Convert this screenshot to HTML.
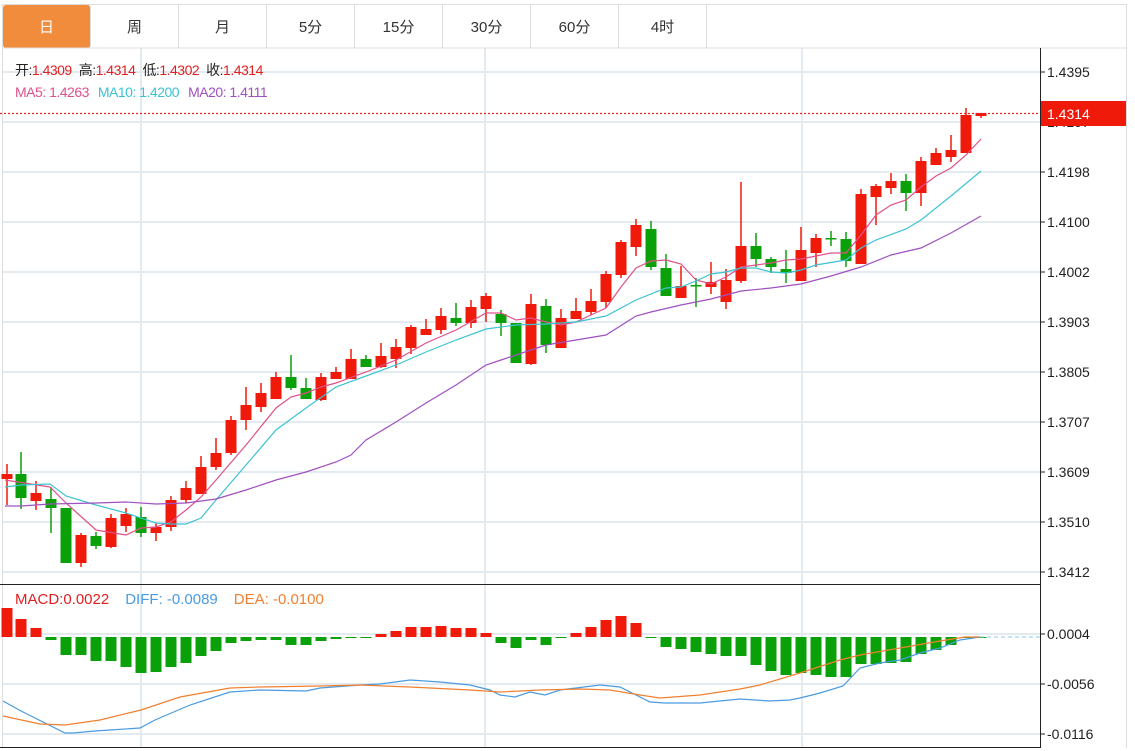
<!DOCTYPE html>
<html><head><meta charset="utf-8"><style>
html,body{margin:0;padding:0;background:#fff;width:1135px;height:751px;overflow:hidden;font-family:"Liberation Sans","Noto Sans CJK SC",sans-serif}
.tabs{position:absolute;left:2px;top:4px;height:44px;width:1125px;border:1px solid #ddd;border-bottom:none;box-sizing:border-box}
.tab{position:absolute;top:0;height:43px;width:88px;line-height:45px;text-align:center;font-size:15px;color:#333;border-right:1px solid #ddd;box-sizing:border-box}
.tab.on{background:#f08c3c;color:#fff;border-radius:3px}
svg{position:absolute;left:0;top:0}
</style></head><body>
<div class="tabs">
<div class="tab on" style="left:0">日</div>
<div class="tab" style="left:88px">周</div>
<div class="tab" style="left:176px">月</div>
<div class="tab" style="left:264px">5分</div>
<div class="tab" style="left:352px">15分</div>
<div class="tab" style="left:440px">30分</div>
<div class="tab" style="left:528px">60分</div>
<div class="tab" style="left:616px">4时</div>
</div>
<svg id="s" width="1135" height="751" xmlns="http://www.w3.org/2000/svg" font-family="Liberation Sans, Noto Sans CJK SC, sans-serif">
<g id="grid" stroke="#e3eaf0" stroke-width="2"></g>
<line x1="2" y1="48" x2="1127" y2="48" stroke="#ddd"/>
<line x1="2.5" y1="48" x2="2.5" y2="748" stroke="#ddd"/>
<line x1="1126.5" y1="4" x2="1126.5" y2="748" stroke="#ddd"/>
<line x1="0" y1="584.5" x2="1040" y2="584.5" stroke="#222"/>
<line x1="0" y1="747.5" x2="1040" y2="747.5" stroke="#222"/>
<line x1="1040.5" y1="48" x2="1040.5" y2="748" stroke="#222"/>
<g id="c"></g>
<g id="axis" font-size="14" fill="#222"></g>
<line x1="0" y1="113.5" x2="1040" y2="113.5" stroke="#f02020" stroke-width="1.2" stroke-dasharray="2,2"/>
<rect x="1041" y="101" width="85" height="25" fill="#f01a0a"/>
<text x="1047" y="119" font-size="14" fill="#fff">1.4314</text>
<text x="15" y="75" font-size="14" letter-spacing="-0.5"><tspan fill="#222">开:</tspan><tspan fill="#e02020">1.4309</tspan><tspan fill="#222" dx="7">高:</tspan><tspan fill="#e02020">1.4314</tspan><tspan fill="#222" dx="7">低:</tspan><tspan fill="#e02020">1.4302</tspan><tspan fill="#222" dx="7">收:</tspan><tspan fill="#e02020">1.4314</tspan></text>
<text x="15" y="97" font-size="14" letter-spacing="-0.5"><tspan fill="#e0508a">MA5: 1.4263</tspan><tspan fill="#3cc3d3" dx="9">MA10: 1.4200</tspan><tspan fill="#a050c0" dx="9">MA20: 1.4111</tspan></text>
<text x="15" y="604" font-size="15"><tspan fill="#e02020">MACD:0.0022</tspan><tspan fill="#4a9be0" dx="16">DIFF: -0.0089</tspan><tspan fill="#f08030" dx="16">DEA: -0.0100</tspan></text>
</svg>
<script>
var NS="http://www.w3.org/2000/svg";
function el(p,t,a){var e=document.createElementNS(NS,t);for(var k in a)e.setAttribute(k,a[k]);document.getElementById(p).appendChild(e);return e;}
[72,122,172,222,272,322,372,422,472,522,572,634,684,734].forEach(function(y){el("grid","line",{x1:3,y1:y,x2:1040,y2:y});});
[141,485,802].forEach(function(x){el("grid","line",{x1:x,y1:48,x2:x,y2:748});});
var ax=[["1.4395",72],["1.4297",122],["1.4198",172],["1.4100",222],["1.4002",272],["1.3903",322],["1.3805",372],["1.3707",422],["1.3609",472],["1.3510",522],["1.3412",572],["0.0004",634],["-0.0056",684],["-0.0116",734]];
ax.forEach(function(a){el("axis","line",{x1:1040,y1:a[1],x2:1045,y2:a[1],stroke:"#222"});var t=el("axis","text",{x:1047,y:a[1]+5});t.textContent=a[0];});
var R="#f01a0a",G="#0aa00a";
var C=[[7,R,474,479,464,505],[21,G,474,498,452,509],[36,R,493,501,481,510],[51,G,499,508,487,533],[66,G,508,563,508,563],[81,R,535,563,533,567],[96,G,536,546,532,549],[111,R,518,547,514,548],[126,R,514,526,508,532],[141,G,517,533,507,537],[156,R,527,533,523,541],[171,R,500,527,496,531],[186,R,488,500,481,503],[201,R,467,494,456,494],[216,R,453,467,438,470],[231,R,420,453,416,455],[246,R,405,420,387,430],[261,R,393,407,383,412],[276,R,377,399,372,399],[291,G,377,388,355,390],[306,G,388,399,378,399],[321,R,377,400,373,401],[336,R,372,379,367,379],[351,R,359,379,349,379],[366,G,359,367,355,367],[381,R,356,367,343,368],[396,R,347,359,339,368],[411,R,327,348,325,354],[426,R,329,335,319,335],[441,R,316,330,308,334],[456,G,318,323,303,326],[471,R,307,323,300,328],[486,R,296,309,293,322],[501,G,314,323,310,336],[516,G,323,363,323,363],[531,R,304,364,294,365],[546,G,306,345,299,353],[561,R,318,348,309,348],[576,R,311,319,298,319],[591,R,301,312,289,315],[606,R,274,302,271,308],[621,R,242,275,240,278],[636,R,225,247,219,256],[651,G,229,267,221,270],[666,G,268,296,254,296],[681,R,286,298,266,298],[696,G,285,286,278,307],[711,R,282,287,262,294],[726,R,280,302,269,309],[741,R,246,281,182,283],[756,G,246,259,233,267],[771,G,259,267,257,273],[786,G,269,273,250,283],[801,R,250,281,227,281],[816,R,238,253,234,267],[831,G,238,239,231,246],[846,G,239,261,232,267],[861,R,194,264,189,264],[876,R,186,197,184,225],[891,R,181,188,173,194],[906,G,181,193,174,211],[921,R,161,193,157,206],[936,R,153,165,148,165],[951,R,150,157,135,162],[966,R,115,153,108,153],[981,R,113,116,113,118]];
C.forEach(function(c){el("c","line",{x1:c[0],y1:c[4],x2:c[0],y2:c[5],stroke:c[1],"stroke-width":1.5});el("c","rect",{x:c[0]-5.5,y:c[2],width:11,height:Math.max(1.5,c[3]-c[2]),fill:c[1]});});
function pl(pts,col){el("c","polyline",{points:pts,fill:"none",stroke:col,"stroke-width":1.2});}
pl("5,480 50,487 66,503 96,530 126,535 141,528 156,527 171,522 186,510 201,497 216,480 246,445 276,408 291,397 306,393 321,387 336,383 366,372 396,360 426,343 456,330 486,313 501,313 516,320 531,318 546,322 561,325 576,322 591,315 606,308 621,287 636,268 651,261 666,260 681,264 696,280 711,284 726,277 741,267 756,265 771,263 786,260 801,259 816,256 831,253 846,253 861,235 876,215 891,205 906,200 921,187 936,176 951,168 966,155 981,139","#e0508a");
pl("5,487 21,485 50,484 66,496 96,505 126,513 156,523 171,524 186,524 201,518 216,500 246,465 276,430 306,408 336,387 366,376 396,365 426,352 456,340 486,329 516,325 546,324 576,322 606,316 636,300 666,288 681,287 696,281 711,274 726,272 741,268 756,268 771,272 786,273 801,270 816,265 846,260 861,248 876,240 906,229 921,220 951,196 981,171","#3cc3d3");
pl("5,506 21,506 50,504 96,503 126,502 156,504 186,503 216,499 246,490 276,480 306,472 336,462 351,455 366,440 396,422 426,403 456,385 486,365 501,360 516,355 546,345 576,340 606,335 636,316 651,312 681,305 711,299 741,291 771,288 801,284 831,276 861,267 891,255 921,248 951,233 981,216","#a050c0");
var M=[[7,608],[21,619],[36,628],[51,640],[66,655],[81,655],[96,661],[111,661],[126,667],[141,673],[156,672],[171,667],[186,663],[201,656],[216,651],[231,643],[246,641],[261,640],[276,640],[291,645],[306,645],[321,641],[336,639],[351,638],[366,638],[381,634],[396,631],[411,627],[426,627],[441,626],[456,628],[471,628],[486,633],[501,643],[516,648],[531,640],[546,645],[561,638],[576,633],[591,627],[606,620],[621,616],[636,623],[651,637],[666,647],[681,649],[696,652],[711,654],[726,656],[741,656],[756,665],[771,671],[786,675],[801,673],[816,675],[831,677],[846,677],[861,664],[876,664],[891,663],[906,662],[921,654],[936,650],[951,645],[966,638],[981,637]];
var Z=637;
M.forEach(function(m,i){var up=i<3||(i>=25&&i<=32)||(i>=38&&i<=42);var y1=Math.min(m[1],Z),h=Math.max(1,Math.abs(m[1]-Z));el("c","rect",{x:m[0]-5.5,y:y1,width:11,height:h,fill:up?R:G});});
el("c","line",{x1:980,y1:Z,x2:1040,y2:Z,stroke:"#8cc8f0","stroke-dasharray":"4,3"});
pl("3,701 21,711 65,733 73,733 95,731 110,730 140,728 155,720 190,705 230,692 260,690 306,691 320,688 360,685 380,684 410,680 440,682 470,685 490,690 500,695 515,697 530,692 545,695 560,690 600,685 620,687 636,695 650,702 665,703 700,703 740,699 755,700 770,701 790,700 800,698 820,693 843,686 860,668 880,663 900,660 920,653 940,648 960,640 980,637","#4a9be0");
pl("3,716 40,724 65,725 100,720 141,710 180,697 230,688 260,687 320,686 360,685 410,687 470,690 500,692 540,690 580,689 610,690 640,695 660,698 700,695 740,689 760,685 800,673 840,660 860,655 900,648 940,641 965,637 980,637","#f08030");
</script>
</body></html>
